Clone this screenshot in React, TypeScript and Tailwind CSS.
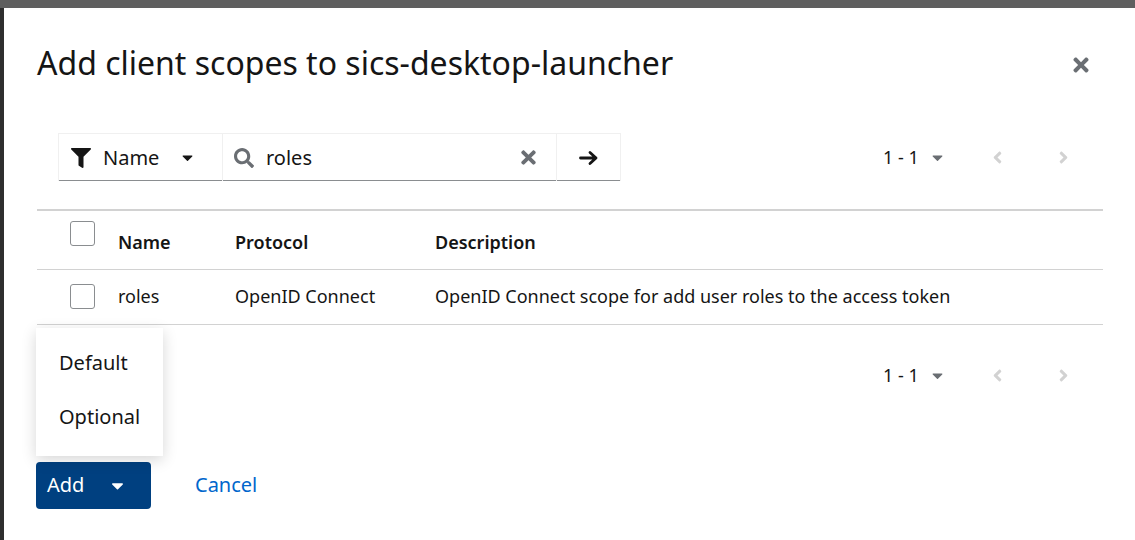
import React from 'react';
import { FaFilter, FaSearch, FaTimes, FaCaretDown, FaAngleLeft, FaAngleRight } from 'react-icons/fa';

const font = { fontFamily: '"Noto Sans", "Liberation Sans", sans-serif' };

const ArrowRight = () => (
  <svg width="20" height="16" viewBox="0 0 20 16" fill="none">
    <path d="M1.5 8h15.5M11 2.5 17 8l-6 5.5" stroke="#151515" strokeWidth="2.8" strokeLinecap="round" strokeLinejoin="round" />
  </svg>
);

const Checkbox = () => (
  <span className="block w-[25px] h-[25px] rounded-[3px] border border-[#8a8d90] bg-white" />
);

const Pagination = () => (
  <div className="flex items-center h-[48px]">
    <button className="flex items-center gap-[10px] text-[18px] text-[#151515] w-[81px]">
      <span>1 - 1</span>
      <FaCaretDown size={17} className="text-[#6a6e73]" />
    </button>
    <button className="w-[66px] flex justify-center text-[#d2d2d2]">
      <FaAngleLeft size={19} />
    </button>
    <button className="w-[66px] flex justify-center text-[#d2d2d2]">
      <FaAngleRight size={19} />
    </button>
  </div>
);

export default function App() {
  return (
    <div className="w-[1135px] h-[540px] flex flex-col overflow-hidden bg-[#5f5f5f]" style={font}>
      <div className="h-[8px] bg-[#5f5f5f]" />
      <div className="flex flex-1">
        <div className="w-[4px] bg-[#2e2e2e]" />
        <div className="flex-1 bg-white pl-[33px] pr-[32px]">
          {/* header */}
          <div className="flex items-center justify-between pt-[38px]">
            <h1 className="text-[32px] leading-[34px] text-[#151515] font-normal">
              Add client scopes to sics-desktop-launcher
            </h1>
            <button className="mr-[11px] mt-[4px] text-[#6a6e73]">
              <FaTimes size={22} />
            </button>
          </div>

          {/* toolbar */}
          <div className="flex items-center justify-between mt-[53px] pl-[21px] pr-[7px]">
            <div className="flex h-[48px] border-t border-x border-[#f0f0f0] shadow-[inset_0_-1px_0_#8a8d90]">
              <button className="w-[164px] flex items-center pl-[12px] pr-[26px] text-[20px] text-[#151515] border-r border-[#f0f0f0]">
                <FaFilter size={20} className="mr-[12px]" />
                <span>Name</span>
                <FaCaretDown size={17} className="ml-auto" />
              </button>
              <div className="w-[334px] flex items-center pl-[11px] pr-[17px] border-r border-[#f0f0f0]">
                <FaSearch size={20} className="text-[#6a6e73] mr-[12px]" />
                <span className="text-[20px] text-[#151515]">roles</span>
                <FaTimes size={21} className="ml-auto text-[#6a6e73]" />
              </div>
              <button className="w-[63px] flex items-center justify-center">
                <ArrowRight />
              </button>
            </div>
            <Pagination />
          </div>

          {/* table */}
          <table className="w-full mt-[28px] border-t-2 border-[#d2d2d2] text-[18px] text-[#151515]">
            <thead>
              <tr className="h-[59px] border-b border-[#d2d2d2]">
                <th className="w-[81px] pl-[33px] align-top pt-[10px] font-normal text-left">
                  <Checkbox />
                </th>
                <th className="w-[117px] pt-[5px] text-left font-semibold">Name</th>
                <th className="w-[200px] pt-[5px] text-left font-semibold">Protocol</th>
                <th className="pt-[5px] text-left font-semibold">Description</th>
              </tr>
            </thead>
            <tbody>
              <tr className="h-[55px] border-b border-[#d2d2d2]">
                <td className="pl-[33px]">
                  <Checkbox />
                </td>
                <td>roles</td>
                <td>OpenID Connect</td>
                <td>OpenID Connect scope for add user roles to the access token</td>
              </tr>
            </tbody>
          </table>

          <div className="flex justify-end pr-[7px] mt-[27px]">
            <Pagination />
          </div>

          {/* footer */}
          <div className="relative flex items-center mt-[62px] -ml-px">
            <div className="absolute left-0 bottom-[53px] w-[127px] pt-[8px] pb-[12px] bg-white shadow-[0_4px_14px_rgba(3,3,3,0.16)] text-[20px] text-[#151515]">
              <div className="h-[54px] flex items-center pl-[23px]">Default</div>
              <div className="h-[54px] flex items-center pl-[23px]">Optional</div>
            </div>
            <button className="h-[47px] w-[115px] rounded-[4px] bg-[#004080] text-white text-[20px] flex items-center pl-[11px]">
              <span>Add</span>
              <FaCaretDown size={19} className="ml-[24px]" />
            </button>
            <button className="ml-[44px] text-[20px] text-[#0066cc]">Cancel</button>
          </div>
        </div>
      </div>
    </div>
  );
}
